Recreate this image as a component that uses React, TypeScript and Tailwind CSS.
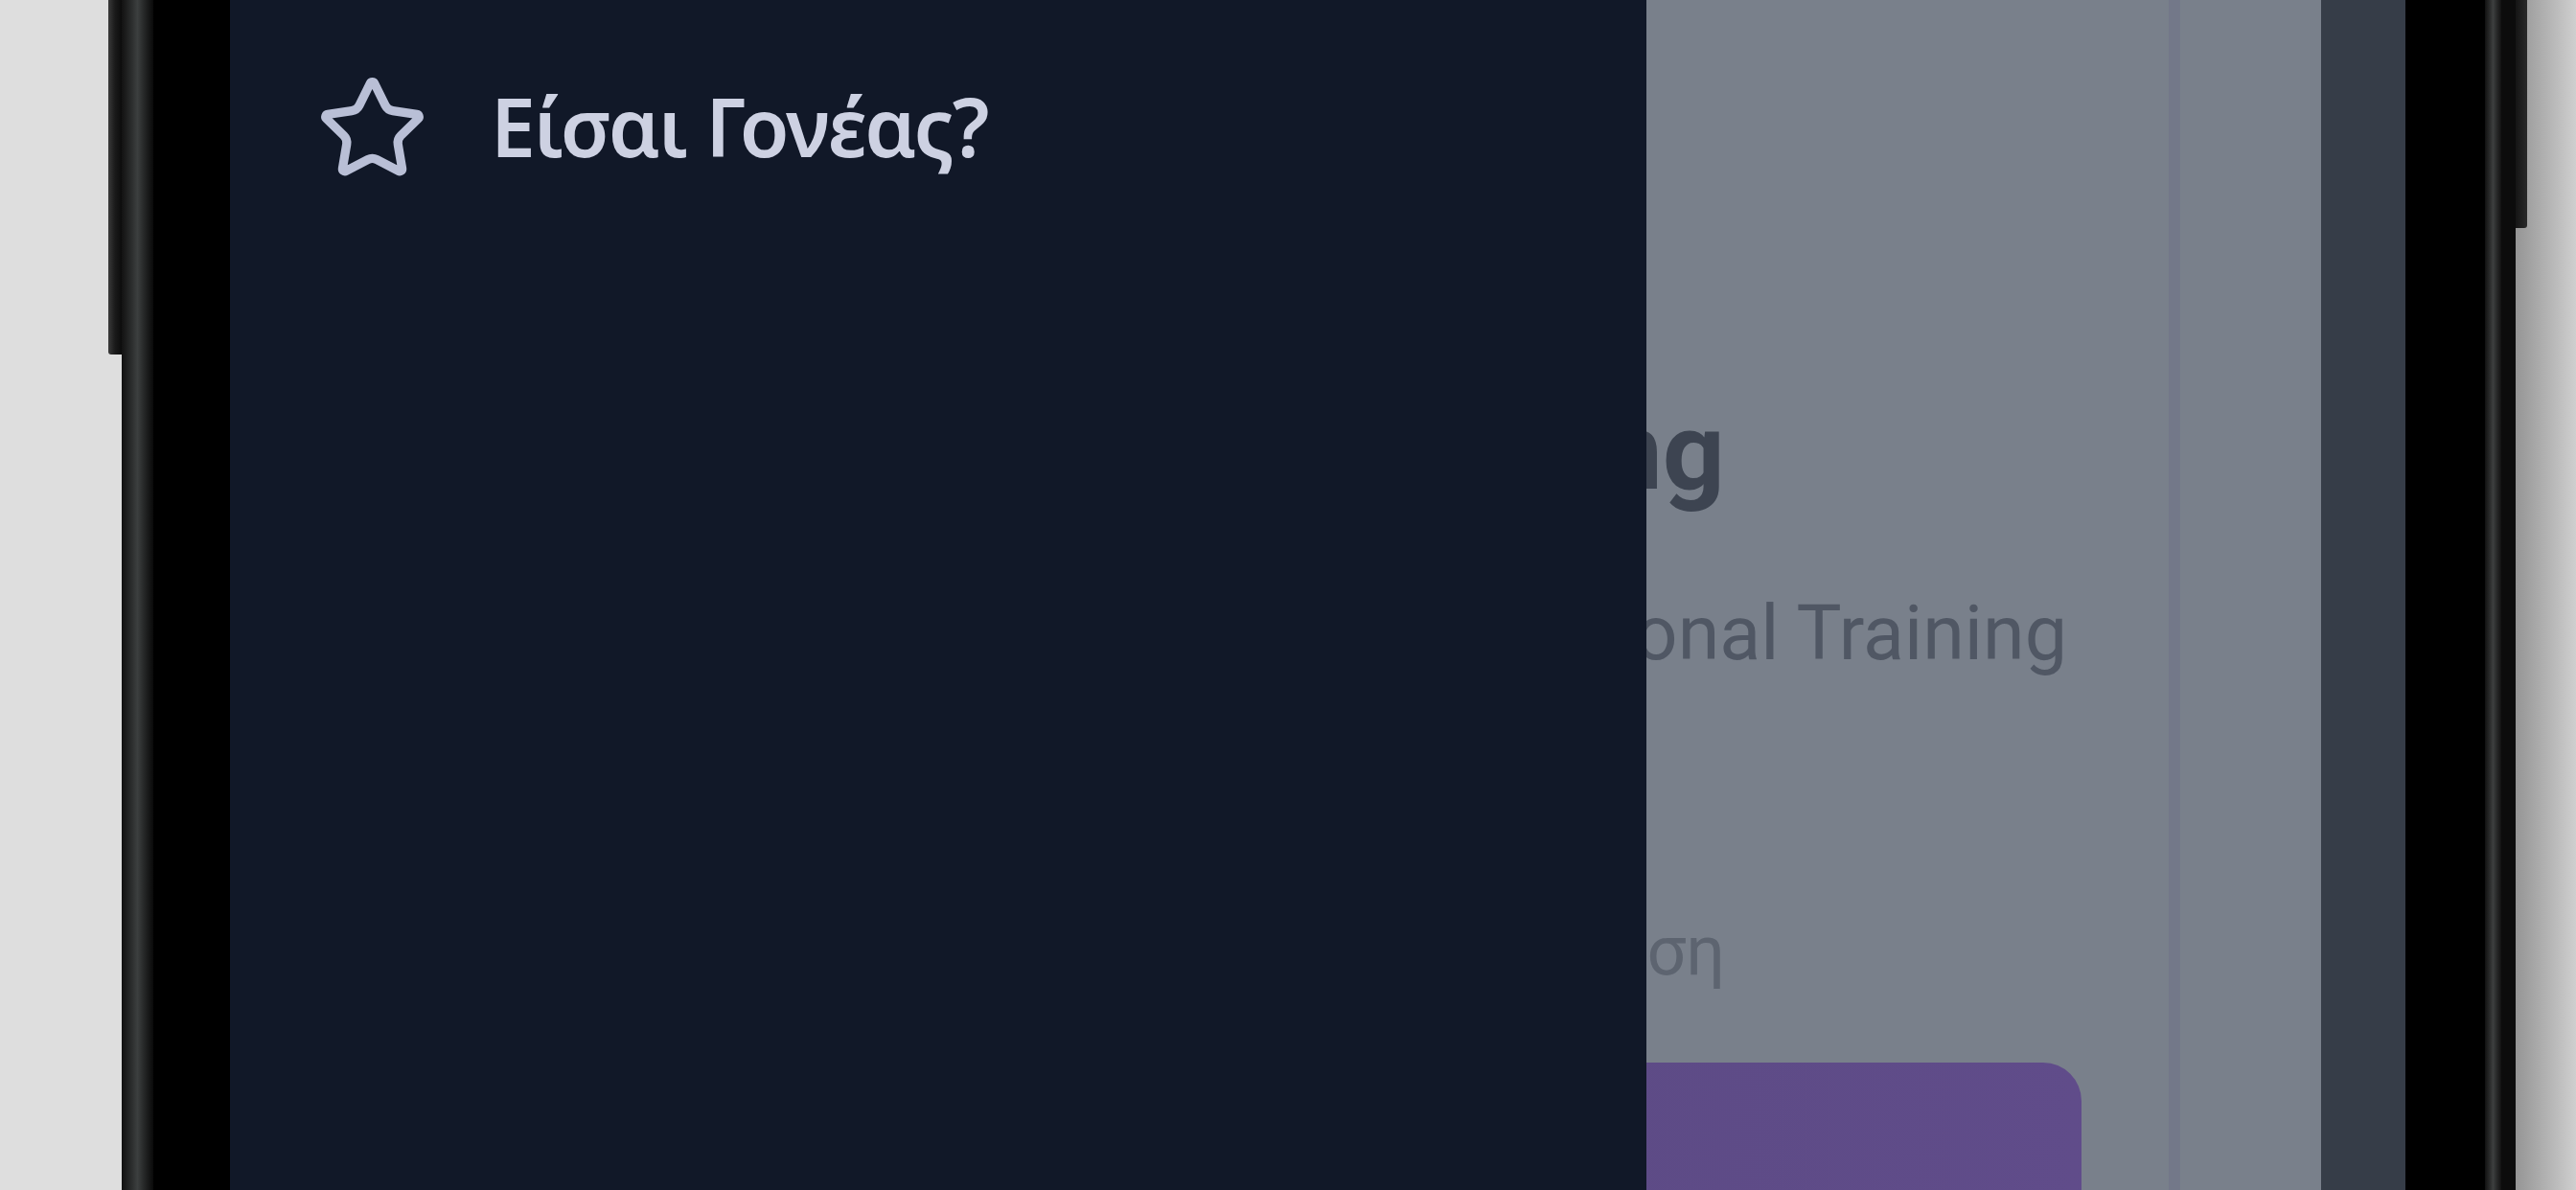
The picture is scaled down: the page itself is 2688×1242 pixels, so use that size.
import React from "react";
import { Star } from "lucide-react";

export default function App() {
  return (
    <div className="flex h-[1242px] w-[2688px] overflow-hidden bg-[#dedede]">
      {/* left background */}
      <div className="w-[113px] shrink-0" />
      {/* left side button */}
      <div className="flex w-[14px] shrink-0 flex-col">
        <div className="h-[370px] rounded-bl-[3px] bg-gradient-to-r from-[#3a3a3a] via-[#1a1a1a] to-[#0c0c0c]" />
      </div>
      {/* frame edge */}
      <div className="w-[33px] shrink-0 bg-gradient-to-r from-[#121212] via-[#3c3f3f] to-[#0a0a0a]" />
      <div className="w-[80px] shrink-0 bg-black" />

      {/* screen */}
      <div className="relative flex w-[2270px] shrink-0">
        {/* app content under overlay */}
        <div className="flex w-[2023px] shrink-0 flex-col bg-[#79808b] pt-[414px]" style={{ fontFamily: "Roboto, 'Noto Sans', sans-serif" }}>
          <div className="flex justify-end pr-[463px]">
            <span className="text-[114px] font-bold leading-none text-[#3d4451]">Training</span>
          </div>
          <div className="mt-[94px] flex justify-end pr-[106px]">
            <span className="text-[79px] leading-none text-[#505764]">Personal Training</span>
          </div>
          <div className="mt-[256px] flex justify-end pr-[463px]">
            <span className="text-[72px] leading-none text-[#5d6470]">Κράτηση</span>
          </div>
          <div className="mt-[80px] flex justify-end pr-[91px]">
            <div className="h-[300px] w-[1400px] rounded-[40px] bg-gradient-to-r from-[#58497f] to-[#604c8a]" />
          </div>
        </div>
        <div className="w-[12px] shrink-0 bg-[#737889]" />
        <div className="w-[147px] shrink-0 bg-[#79808b]" />
        <div className="w-[88px] shrink-0 bg-[#363d48]" />

        {/* drawer */}
        <div className="absolute left-0 top-0 flex h-full w-[1478px] flex-col bg-[#111828] pl-[90px] pt-[76px]">
          <div className="flex items-start">
            <Star size={117} strokeWidth={1.9} color="#b9bfd6" />
            <span
              className="ml-[65px] mt-[14px] text-[84px] font-semibold leading-none tracking-[-2px] text-[#cdd1e2]"
              style={{ fontFamily: "'Noto Sans', sans-serif" }}
            >
              Είσαι Γονέας?
            </span>
          </div>
        </div>
      </div>

      {/* right frame */}
      <div className="w-[83px] shrink-0 bg-black" />
      <div className="w-[17px] shrink-0 bg-gradient-to-r from-[#111111] via-[#3d3f3f] to-[#121212]" />
      <div className="w-[15px] shrink-0 bg-[#0c0c0c]" />
      {/* right background with side button */}
      <div className="flex flex-1 flex-col bg-gradient-to-r from-[#959595] to-[#cfcfcf]">
        <div className="h-[238px] w-[12px] rounded-br-[3px] bg-gradient-to-r from-[#151515] to-[#2a2a2a]" />
      </div>
    </div>
  );
}
